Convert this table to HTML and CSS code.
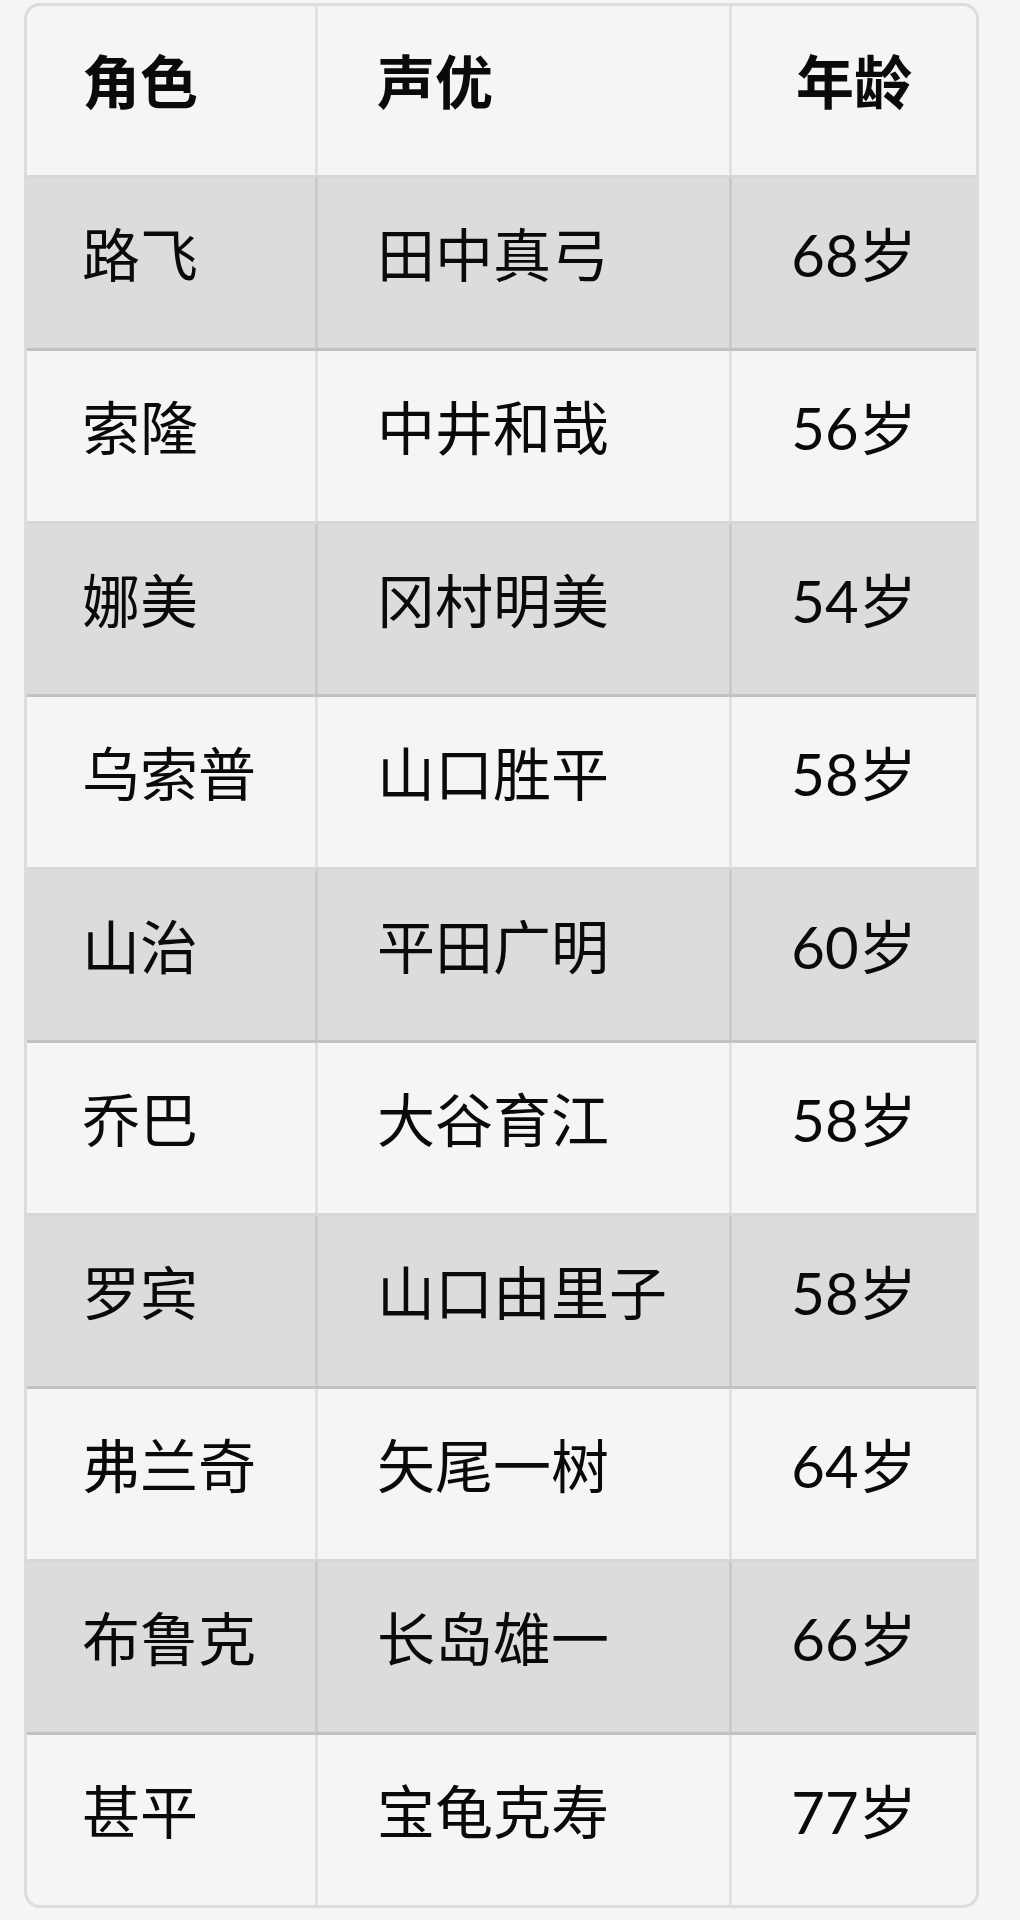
FILE: index.html
```html
<!DOCTYPE html>
<html lang="zh-CN">
<head>
<meta charset="utf-8">
<title>海贼王 角色与声优</title>
<link rel="stylesheet" href="styles.css">
</head>
<body>
<div class="wrap">
  <div class="table" role="table">
    <div class="row head" role="row">
      <div class="cell c1" role="columnheader">角色</div>
      <div class="cell c2" role="columnheader">声优</div>
      <div class="cell c3" role="columnheader">年龄</div>
    </div>
    <div class="row odd" role="row">
      <div class="cell c1">路飞</div><div class="cell c2">田中真弓</div><div class="cell c3">68岁</div>
    </div>
    <div class="row" role="row">
      <div class="cell c1">索隆</div><div class="cell c2">中井和哉</div><div class="cell c3">56岁</div>
    </div>
    <div class="row odd" role="row">
      <div class="cell c1">娜美</div><div class="cell c2">冈村明美</div><div class="cell c3">54岁</div>
    </div>
    <div class="row" role="row">
      <div class="cell c1">乌索普</div><div class="cell c2">山口胜平</div><div class="cell c3">58岁</div>
    </div>
    <div class="row odd" role="row">
      <div class="cell c1">山治</div><div class="cell c2">平田广明</div><div class="cell c3">60岁</div>
    </div>
    <div class="row" role="row">
      <div class="cell c1">乔巴</div><div class="cell c2">大谷育江</div><div class="cell c3">58岁</div>
    </div>
    <div class="row odd" role="row">
      <div class="cell c1">罗宾</div><div class="cell c2">山口由里子</div><div class="cell c3">58岁</div>
    </div>
    <div class="row" role="row">
      <div class="cell c1">弗兰奇</div><div class="cell c2">矢尾一树</div><div class="cell c3">64岁</div>
    </div>
    <div class="row odd" role="row">
      <div class="cell c1">布鲁克</div><div class="cell c2">长岛雄一</div><div class="cell c3">66岁</div>
    </div>
    <div class="row last" role="row">
      <div class="cell c1">甚平</div><div class="cell c2">宝龟克寿</div><div class="cell c3">77岁</div>
    </div>
  </div>
</div>
</body>
</html>
```

FILE: styles.css
```css
html, body {
  margin: 0;
  padding: 0;
  background: #f5f5f5;
}

body {
  font-family: Lato, "Noto Sans CJK SC", "Noto Sans", sans-serif;
  color: #0a0a0a;
}

.wrap {
  padding: 3px 0 0 24px;
}

.table {
  width: 955px;
  box-sizing: border-box;
  border: 3px solid #dcdcdc;
  border-radius: 16px;
  overflow: hidden;
  background: #f5f5f5;
}

.row {
  display: grid;
  grid-template-columns: 291px 414px 244px;
  height: 173px;
  box-sizing: border-box;
  border-bottom: 3px solid rgba(0, 0, 0, 0.12);
}

.row.head {
  height: 172px;
}

.row.last {
  border-bottom: none;
  height: 170px;
}

.row.odd {
  background: #dcdcdc;
}

.cell {
  display: flex;
  align-items: center;
  font-size: 58px;
  line-height: 1;
  white-space: nowrap;
  box-sizing: border-box;
  padding-bottom: 16px;
}

.head .cell {
  font-weight: 700;
  padding-bottom: 18px;
}

.c1 {
  padding-left: 55px;
  border-right: 3px solid rgba(0, 0, 0, 0.08);
}

.c2 {
  padding-left: 59px;
  border-right: 3px solid rgba(0, 0, 0, 0.08);
}

.c3 {
  justify-content: center;
}
```
